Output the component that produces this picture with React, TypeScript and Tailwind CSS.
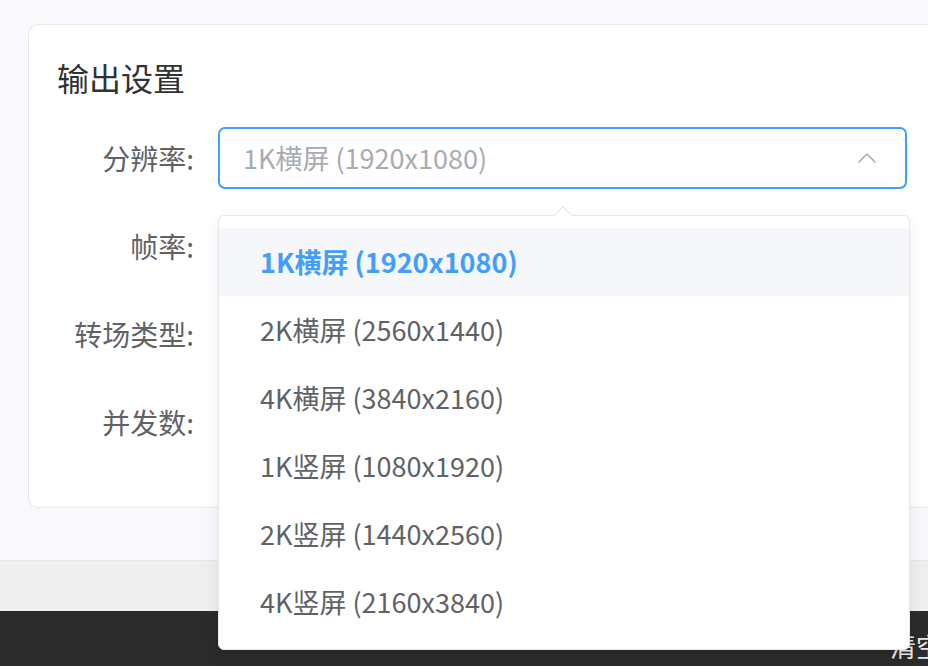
import { ChevronUp } from "lucide-react";

const font = { fontFamily: '"Noto Sans CJK SC", "Noto Sans", sans-serif' };

const options = [
  "1K横屏 (1920x1080)",
  "2K横屏 (2560x1440)",
  "4K横屏 (3840x2160)",
  "1K竖屏 (1080x1920)",
  "2K竖屏 (1440x2560)",
  "4K竖屏 (2160x3840)",
];

const labels = ["分辨率:", "帧率:", "转场类型:", "并发数:"];

export default function App() {
  return (
    <div
      className="relative h-[666px] w-[928px] overflow-hidden bg-[#f9f9fb] flex flex-col"
      style={font}
    >
      {/* Settings card */}
      <div className="h-[560px] pl-[28px] pt-[24px]">
        <div className="w-[920px] h-[484px] bg-white border border-r-0 border-[#e4e7ed] rounded-l-[10px] pt-[29px]">
          <h2 className="pl-[28px] text-[32px] leading-[46px] font-normal text-[#303133]">
            输出设置
          </h2>
          <div className="mt-[27px] flex flex-col gap-[26px]">
            {labels.map((label, i) => (
              <div key={label} className="flex items-center h-[62px]">
                <div className="w-[165px] text-right text-[28px] text-[#606266]">
                  {label}
                </div>
                <div
                  className={
                    i === 0
                      ? "ml-[24px] w-[689px] h-[62px] border-2 border-[#409eff] rounded-[7px] flex items-center justify-between pl-[23px] pr-[22px]"
                      : "ml-[24px] w-[689px] h-[62px] border border-[#dcdfe6] rounded-[7px]"
                  }
                >
                  {i === 0 && (
                    <>
                      <span className="text-[27px] text-[#a8abb2]">
                        1K横屏 (1920x1080)
                      </span>
                      <ChevronUp className="w-[32px] h-[32px] text-[#a8abb2]" strokeWidth={1.2} />
                    </>
                  )}
                </div>
              </div>
            ))}
          </div>
        </div>
      </div>

      {/* Footer band */}
      <div className="h-[51px] bg-[#efefef] border-t border-[#e4e7ed]" />

      {/* Dark action bar */}
      <div className="flex-1 bg-[#2b2b2b] flex justify-end pt-[22px]">
        <span className="text-[26px] leading-none text-[#e8e8e8] mr-[-14px]">清空</span>
      </div>

      {/* Dropdown */}
      <div className="absolute left-[218px] top-[215px] w-[692px] h-[435px] bg-white border border-[#e4e7ed] rounded-[6px] shadow-[0_6px_16px_rgba(0,0,0,0.08)] py-[12px]">
        <div className="absolute left-[337px] top-[-7px] w-[14px] h-[14px] rotate-45 bg-white border-l border-t border-[#e4e7ed]" />
        {options.map((opt, i) => (
          <div
            key={opt}
            className={
              i === 0
                ? "h-[68px] flex items-center pl-[41px] text-[27px] font-bold text-[#409eff] bg-[#f5f7fa]"
                : "h-[68px] flex items-center pl-[41px] text-[27px] text-[#606266]"
            }
          >
            {opt}
          </div>
        ))}
      </div>
    </div>
  );
}
